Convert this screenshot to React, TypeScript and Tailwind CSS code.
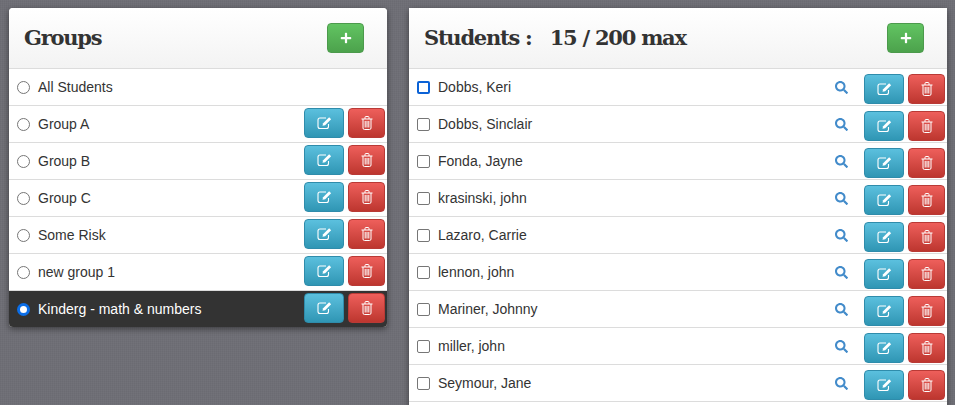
import { FaPlus, FaSearch } from "react-icons/fa";

const groups = ["All Students", "Group A", "Group B", "Group C", "Some Risk", "new group 1", "Kinderg - math & numbers"];
const students = ["Dobbs, Keri", "Dobbs, Sinclair", "Fonda, Jayne", "krasinski, john", "Lazaro, Carrie", "lennon, john", "Mariner, Johnny", "miller, john", "Seymour, Jane"];

function EditIcon() {
  return (
    <svg width="15" height="14" viewBox="0 0 15 14" fill="none" stroke="currentColor">
      <path d="M11.5 8v2.5a2 2 0 0 1-2 2h-6.5a2 2 0 0 1-2-2v-6.5a2 2 0 0 1 2-2h6" strokeWidth="1.1" />
      <path d="M5.5 9.8l.6-2.6 6-6 2 2-6 6z" fill="currentColor" stroke="none" />
    </svg>
  );
}

function TrashIcon() {
  return (
    <svg width="12" height="14" viewBox="0 0 12 14" fill="none" stroke="currentColor" strokeWidth="1">
      <path d="M0.5 3h11M4 3V1.5a1 1 0 0 1 1-1h2a1 1 0 0 1 1 1V3" />
      <path d="M2 3v9a1.5 1.5 0 0 0 1.5 1.5h5A1.5 1.5 0 0 0 10 12V3" />
      <path d="M4.2 5v6.5M6 5v6.5M7.8 5v6.5" />
    </svg>
  );
}

function Actions({ top }: { top: string }) {
  return (
    <div className={`flex gap-1 self-start ${top}`}>
      <button className="flex h-[30px] w-[40px] items-center justify-center rounded-[4px] border border-[#2f8cab] bg-gradient-to-b from-[#5bc0de] to-[#2f96b4] text-white">
        <EditIcon />
      </button>
      <button className="flex h-[30px] w-[37px] items-center justify-center rounded-[4px] border border-[#b93a36] bg-gradient-to-b from-[#ee5f5b] to-[#bd362f] text-white">
        <TrashIcon />
      </button>
    </div>
  );
}

function AddButton() {
  return (
    <button className="flex h-[30px] w-[37px] items-center justify-center rounded-[4px] border border-[#4c9a4c] bg-gradient-to-b from-[#62c462] to-[#4ca24c] text-white">
      <FaPlus size={12} />
    </button>
  );
}

function Header({ children, pad }: { children: React.ReactNode; pad: string }) {
  return (
    <div className={`flex h-[61px] items-center justify-between border-b border-[#dcdcdc] bg-gradient-to-b from-white to-[#f3f3f3] pl-[15px] ${pad}`}>
      <h2 className="whitespace-pre font-['DejaVu_Serif',serif] text-[21px] font-bold tracking-[-1.25px] text-[#333]">{children}</h2>
      <AddButton />
    </div>
  );
}

export default function App() {
  return (
    <div className="flex h-[405px] items-start gap-[22px] overflow-hidden bg-[#6f6f76] bg-[repeating-linear-gradient(0deg,rgba(255,255,255,0.025)_0_1px,transparent_1px_2px),repeating-linear-gradient(90deg,rgba(0,0,0,0.035)_0_1px,transparent_1px_2px)] pl-[9px] pt-2 font-['Liberation_Sans',sans-serif] text-sm text-[#333]">
      <section className="w-[378px] shrink-0 overflow-hidden rounded-[4px] bg-white shadow-[0_2px_6px_rgba(0,0,0,0.45)]">
        <Header pad="pr-[23px]">Groups</Header>
        {groups.map((g, i) => {
          const active = i === groups.length - 1;
          return (
            <div key={g} className={`flex items-center justify-between pr-0.5 pl-2 ${active ? "h-[36px] bg-[#333] text-white" : "h-[37px] border-b border-[#dcdcdc]"}`}>
              <div className="flex items-center gap-2">
                {active ? (
                  <span className="box-border h-[13px] w-[13px] rounded-full border-[3.5px] border-[#0b6ee8] bg-white" />
                ) : (
                  <span className="box-border h-[13px] w-[13px] rounded-full border border-[#767676] bg-white" />
                )}
                <span>{g}</span>
              </div>
              {i > 0 && <Actions top="mt-0.5" />}
            </div>
          );
        })}
      </section>
      <section className="min-h-[400px] w-[538px] shrink-0 rounded-[4px] bg-white shadow-[0_2px_6px_rgba(0,0,0,0.45)]">
        <Header pad="pr-[23px]">{"Students :   15 / 200 max"}</Header>
        {students.map((s, i) => (
          <div key={s} className="flex h-[37px] items-center justify-between border-b border-[#dcdcdc] pr-0.5 pl-2">
            <div className="flex items-center gap-2">
              <span className={`box-border h-[13px] w-[13px] rounded-[2px] bg-white ${i === 0 ? "border-[2.5px] border-[#0b62d6]" : "border border-[#767676]"}`} />
              <span>{s}</span>
            </div>
            <div className="flex items-center gap-4">
              <FaSearch size={13} className="text-[#428bca]" />
              <Actions top="mt-[3px]" />
            </div>
          </div>
        ))}
      </section>
    </div>
  );
}
